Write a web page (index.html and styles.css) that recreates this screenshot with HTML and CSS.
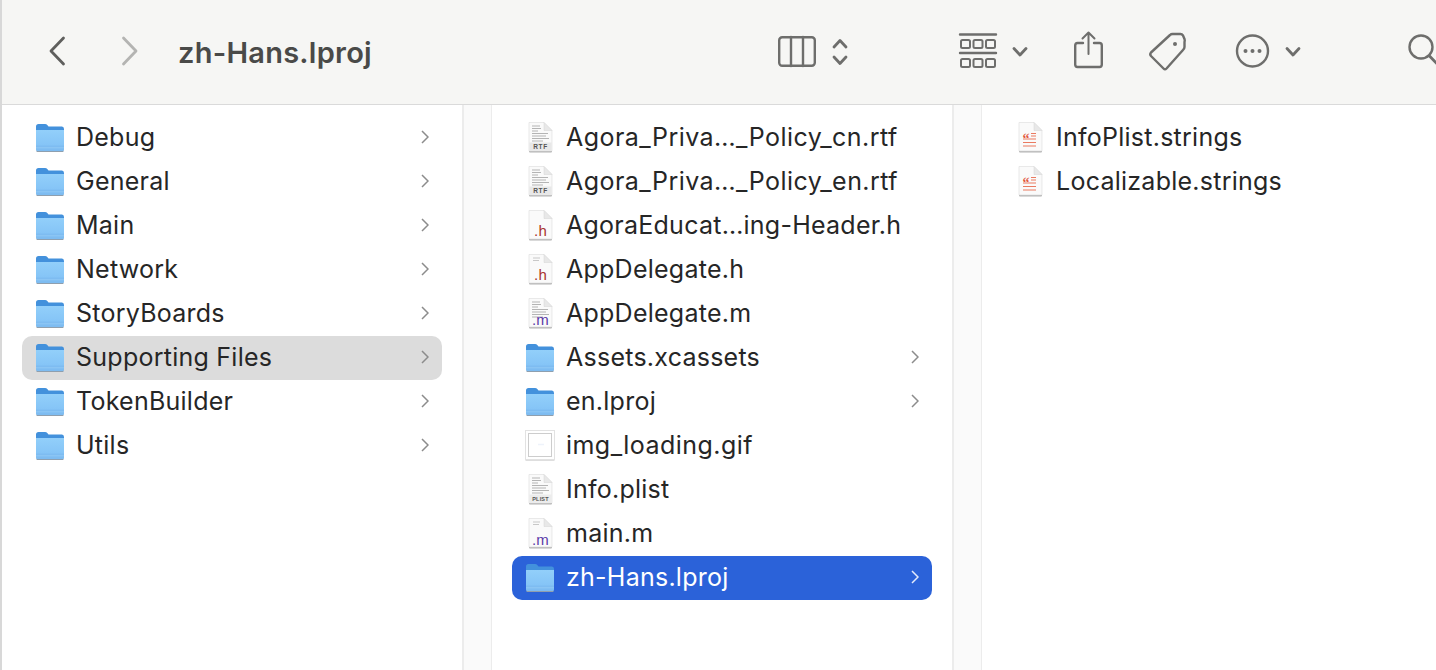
FILE: index.html
```html
<!DOCTYPE html>
<html>
<head>
    <meta charset="utf-8">
    <title>zh-Hans.lproj</title>
    <link rel="stylesheet" href="styles.css">
</head>
<body>

<svg class="defs" xmlns="http://www.w3.org/2000/svg">
    <defs>
        <linearGradient id="folderFront" x1="0" y1="0" x2="0" y2="1">
            <stop offset="0" stop-color="#92cffa"/>
            <stop offset="1" stop-color="#80c0f5"/>
        </linearGradient>
        <symbol id="folder" viewBox="0 0 32 32">
            <path d="M1.500 28.500H28.500V30.500Q28.500 31 27.500 31H2.500Q1.500 31 1.500 30.500Z" fill="#8f9fae"/>
            <path d="M1 5.500Q1 3 3.500 3H10Q11.500 3 12.500 4.200L13.500 5.500H27Q29 5.500 29 8V12H1Z" fill="#4391dc"/>
            <path d="M1 9H29V28Q29 30 27 30H3Q1 30 1 28Z" fill="url(#folderFront)"/>
            <path d="M1 24.500H29V28Q29 30 27 30H3Q1 30 1 28Z" fill="#7ebcf1"/>
            <path d="M1 26.800H29" stroke="#9bd0f8" stroke-width=".7"/>
        </symbol>
        <symbol id="page" viewBox="0 0 32 32">
            <path d="M4 3H19L27 11V30.500Q27 31.500 26 31.500H5Q4 31.500 4 30.500Z" fill="#b4b4b4"/>
            <path d="M4 1.500H19L27 9.500V29.500Q27 30 26.500 30H4.500Q4 30 4 29.500Z" fill="#fafafa" stroke="#dcdcdc" stroke-width=".6"/>
            <path d="M19 1.500V9.500H27Z" fill="#e8e8e8" stroke="#d4d4d4" stroke-width=".5"/>
        </symbol>
        <symbol id="lines" viewBox="0 0 32 32">
            <path d="M7 5H15M7 7.500H16M7 10H13M7 12.500H23M7 15H21M7 17.500H24M7 20H18" stroke="#b4b4b4" stroke-width="1.100"/>
        </symbol>
    </defs>
</svg>

<div class="window">

    <header class="toolbar">
        <svg class="tool nav-back" width="16" height="40" viewBox="0 32 16 40"><path d="M14.500 38L2 51L14.500 64" class="line dark"/></svg>
        <svg class="tool nav-forward" width="16" height="40" viewBox="0 32 16 40"><path d="M1.500 38L14 51L1.500 64" class="line faint"/></svg>
        <div class="title">zh-Hans.lproj</div>

        <svg class="tool" width="38" height="40" viewBox="0 32 38 40">
            <rect x="1.200" y="37.200" width="35.600" height="28.600" rx="3" class="line thin"/>
            <path d="M13 37V66M25 37V66" class="line thin"/>
        </svg>
        <svg class="tool gap-s" width="16" height="40" viewBox="0 32 16 40"><path d="M2 47L8 40.500L14 47M2 57L8 63.500L14 57" class="line"/></svg>

        <svg class="tool gap-view" width="36" height="40" viewBox="0 32 36 40">
            <path d="M0 34.500H36M0 53H36" class="line thin"/>
            <g class="line slim">
                <rect x="1" y="40" width="9" height="8" rx="1.500"/>
                <rect x="13.500" y="40" width="9" height="8" rx="1.500"/>
                <rect x="26" y="40" width="9" height="8" rx="1.500"/>
                <rect x="1" y="59" width="9" height="8" rx="1.500"/>
                <rect x="13.500" y="59" width="9" height="8" rx="1.500"/>
                <rect x="26" y="59" width="9" height="8" rx="1.500"/>
            </g>
        </svg>
        <svg class="tool gap-s" width="16" height="40" viewBox="0 32 16 40"><path d="M2 48.500L8 55L14 48.500" class="line"/></svg>

        <svg class="tool gap-m" width="29" height="40" viewBox="0 32 29 40">
            <path d="M9 43H3.500Q1.200 43 1.200 45.500V64.500Q1.200 67 3.500 67H25.500Q27.800 67 27.800 64.500V45.500Q27.800 43 25.500 43H20" class="line thin"/>
            <path d="M14.500 54V32.500M8.500 38.500L14.500 32.500L20.500 38.500" class="line slim"/>
        </svg>
        <svg class="tool gap-m" width="37" height="40" viewBox="0 32 37 40">
            <path d="M2 52.500L21 35Q22 34 23.500 34H31.500Q33 34 34 35.500L35.500 39Q36 40.500 35.500 42V47Q35.500 48.500 34 50L17.500 68.500Q16 70 14.500 68.500L2 56Q0.500 54 2 52.500Z" class="line thin"/>
            <circle cx="26" cy="44" r="2" class="dot"/>
        </svg>
        <svg class="tool gap-l" width="33" height="40" viewBox="0 32 33 40">
            <circle cx="16.500" cy="51" r="15.500" class="line thin"/>
            <circle cx="9.500" cy="51" r="2" class="dot"/>
            <circle cx="16.500" cy="51" r="2" class="dot"/>
            <circle cx="23.500" cy="51" r="2" class="dot"/>
        </svg>
        <svg class="tool gap-s" width="16" height="40" viewBox="0 32 16 40"><path d="M2 48.500L8 55L14 48.500" class="line"/></svg>

        <svg class="tool gap-search" width="40" height="40" viewBox="0 32 40 40">
            <circle cx="13" cy="47" r="11.500" class="line thin"/>
            <path d="M21.500 56L34 69" class="line"/>
        </svg>
    </header>

    <main class="browser">

        <section class="column">
            <div class="row"><svg class="icon"><use href="#folder"/></svg><span class="name">Debug</span><svg class="chev" viewBox="0 0 8 14"><path d="M1 1L7 7L1 13"/></svg></div>
            <div class="row"><svg class="icon"><use href="#folder"/></svg><span class="name">General</span><svg class="chev" viewBox="0 0 8 14"><path d="M1 1L7 7L1 13"/></svg></div>
            <div class="row"><svg class="icon"><use href="#folder"/></svg><span class="name">Main</span><svg class="chev" viewBox="0 0 8 14"><path d="M1 1L7 7L1 13"/></svg></div>
            <div class="row"><svg class="icon"><use href="#folder"/></svg><span class="name">Network</span><svg class="chev" viewBox="0 0 8 14"><path d="M1 1L7 7L1 13"/></svg></div>
            <div class="row"><svg class="icon"><use href="#folder"/></svg><span class="name">StoryBoards</span><svg class="chev" viewBox="0 0 8 14"><path d="M1 1L7 7L1 13"/></svg></div>
            <div class="row parent"><svg class="icon"><use href="#folder"/></svg><span class="name">Supporting Files</span><svg class="chev" viewBox="0 0 8 14"><path d="M1 1L7 7L1 13"/></svg></div>
            <div class="row"><svg class="icon"><use href="#folder"/></svg><span class="name">TokenBuilder</span><svg class="chev" viewBox="0 0 8 14"><path d="M1 1L7 7L1 13"/></svg></div>
            <div class="row"><svg class="icon"><use href="#folder"/></svg><span class="name">Utils</span><svg class="chev" viewBox="0 0 8 14"><path d="M1 1L7 7L1 13"/></svg></div>
        </section>
        <div class="gutter"></div>

        <section class="column">
            <div class="row"><svg class="icon" viewBox="0 0 32 32"><use href="#page" width="32" height="32"/><use href="#lines" width="32" height="32"/><rect x="4.300" y="21.500" width="22.400" height="8.300" fill="#e8e8e8"/><text x="15.500" y="28" class="tag">RTF</text></svg><span class="name wide">Agora_Priva…_Policy_cn.rtf</span></div>
            <div class="row"><svg class="icon" viewBox="0 0 32 32"><use href="#page" width="32" height="32"/><use href="#lines" width="32" height="32"/><rect x="4.300" y="21.500" width="22.400" height="8.300" fill="#e8e8e8"/><text x="15.500" y="28" class="tag">RTF</text></svg><span class="name wide">Agora_Priva…_Policy_en.rtf</span></div>
            <div class="row"><svg class="icon" viewBox="0 0 32 32"><use href="#page" width="32" height="32"/><text x="15.500" y="27" class="ext red">.h</text></svg><span class="name">AgoraEducat…ing-Header.h</span></div>
            <div class="row"><svg class="icon" viewBox="0 0 32 32"><use href="#page" width="32" height="32"/><path d="M8 5H15M8 7.500H14" class="rule"/><text x="15.500" y="27" class="ext red">.h</text></svg><span class="name">AppDelegate.h</span></div>
            <div class="row"><svg class="icon" viewBox="0 0 32 32"><use href="#page" width="32" height="32"/><use href="#lines" width="32" height="32"/><text x="15.500" y="27.500" class="ext purple">.m</text></svg><span class="name">AppDelegate.m</span></div>
            <div class="row"><svg class="icon"><use href="#folder"/></svg><span class="name">Assets.xcassets</span><svg class="chev" viewBox="0 0 8 14"><path d="M1 1L7 7L1 13"/></svg></div>
            <div class="row"><svg class="icon"><use href="#folder"/></svg><span class="name">en.lproj</span><svg class="chev" viewBox="0 0 8 14"><path d="M1 1L7 7L1 13"/></svg></div>
            <div class="row"><svg class="icon" viewBox="0 0 32 32"><rect x="0.500" y="2.500" width="29" height="29" fill="#bdbdbd"/><rect x="0.500" y="1.500" width="29" height="29" fill="#fff" stroke="#e2e2e2"/><rect x="3.500" y="4.500" width="23" height="23" fill="#fff" stroke="#cdcdcd"/><path d="M13 15.500H19" stroke="#eef3fb" stroke-width="1.500"/></svg><span class="name wide">img_loading.gif</span></div>
            <div class="row"><svg class="icon" viewBox="0 0 32 32"><use href="#page" width="32" height="32"/><use href="#lines" width="32" height="32"/><rect x="4.300" y="21.500" width="22.400" height="8.300" fill="#ececec"/><text x="15.500" y="28" class="tag small">PLIST</text></svg><span class="name">Info.plist</span></div>
            <div class="row"><svg class="icon" viewBox="0 0 32 32"><use href="#page" width="32" height="32"/><path d="M8 5H15M8 7.500H14" class="rule"/><text x="15.500" y="27.500" class="ext purple">.m</text></svg><span class="name">main.m</span></div>
            <div class="row selected"><svg class="icon"><use href="#folder"/></svg><span class="name">zh-Hans.lproj</span><svg class="chev" viewBox="0 0 8 14"><path d="M1 1L7 7L1 13"/></svg></div>
        </section>
        <div class="gutter"></div>

        <section class="column last">
            <div class="row"><svg class="icon" viewBox="0 0 32 32"><use href="#page" width="32" height="32"/><text x="7.500" y="22" class="quote">“</text><path d="M16 12.500H21M16 15H21M8 18H21M8 21.500H21M8 25H21" class="strings"/></svg><span class="name">InfoPlist.strings</span></div>
            <div class="row"><svg class="icon" viewBox="0 0 32 32"><use href="#page" width="32" height="32"/><text x="7.500" y="22" class="quote">“</text><path d="M16 12.500H21M16 15H21M8 18H21M8 21.500H21M8 25H21" class="strings"/></svg><span class="name">Localizable.strings</span></div>
        </section>

    </main>
</div>

</body>
</html>
```

FILE: styles.css
```css
html, body {
    margin: 0;
    height: 100%;
    overflow: hidden;
    background: #fff;
}

.defs {
    display: block;
    width: 0;
    height: 0;
}

.window {
    display: flex;
    flex-direction: column;
    height: 670px;
    border-left: 2px solid #d8d8d8;
    font-family: Inter, "Liberation Sans", sans-serif;
}

/* toolbar */

.toolbar {
    display: flex;
    align-items: center;
    flex: none;
    height: 104px;
    padding-left: 47px;
    background: #f6f6f4;
    border-bottom: 1px solid #dadada;
    overflow: hidden;
}

.tool {
    flex: none;
    overflow: visible;
}

.nav-forward { margin-left: 57px; }

.title {
    flex: none;
    width: 600px;
    margin-left: 40px;
    font-size: 29px;
    font-weight: 600;
    letter-spacing: 0.25px;
    color: #4a4a48;
}

.gap-s { margin-left: 16px; }
.gap-m { margin-left: 46px; }
.gap-l { margin-left: 50px; }
.gap-view { margin-left: 112px; }
.gap-search { margin-left: 107px; }

.line {
    fill: none;
    stroke: #6e6e6c;
    stroke-width: 2.800;
    stroke-linecap: round;
    stroke-linejoin: round;
}

.line.dark { stroke: #5f5f5d; }
.line.faint { stroke: #b4b4b2; }
.line.thin { stroke-width: 2.400; }
.line.slim { stroke-width: 2; }

.dot { fill: #6e6e6c; }

/* columns */

.browser {
    display: flex;
    flex: 1;
    min-height: 0;
}

.column {
    flex: none;
    width: 420px;
    padding: 11px 20px 0;
}

.column.last { flex: 1; }

.gutter {
    flex: none;
    width: 27px;
    background: #fafafa;
    border-left: 2px solid #ececec;
    border-right: 1px solid #ececec;
}

.row {
    display: flex;
    align-items: center;
    box-sizing: border-box;
    height: 44px;
    padding: 0 13px 2px;
    border-radius: 10px;
    font-size: 25px;
    letter-spacing: 0.25px;
    color: #262626;
}

.row.parent { background: #dcdcdc; }

.row.selected {
    background: #2b62d9;
    color: #fff;
}

.icon {
    flex: none;
    width: 32px;
    height: 32px;
    margin-right: 9px;
}

.name { white-space: nowrap; }
.name.wide { letter-spacing: 0.45px; }

.chev {
    flex: none;
    width: 8px;
    height: 14px;
    margin-left: auto;
}

.chev path {
    fill: none;
    stroke: #8c8c8c;
    stroke-width: 1.500;
}

.selected .chev path { stroke: #e4ebfb; }

/* file icons */

.tag {
    font-family: "Liberation Sans", sans-serif;
    font-size: 6.500px;
    font-weight: 700;
    letter-spacing: 0.6px;
    fill: #555;
    text-anchor: middle;
}

.tag.small {
    font-size: 5.500px;
    letter-spacing: 0.2px;
}

.ext {
    font-family: "Liberation Sans", sans-serif;
    font-size: 15px;
    text-anchor: middle;
}

.red { fill: #a8322e; }
.purple { fill: #5a3aa8; }

.rule {
    stroke: #c8c8c8;
    stroke-width: 1;
}

.quote {
    font-family: "Liberation Serif", serif;
    font-size: 14px;
    font-weight: 700;
    fill: #e2573c;
}

.strings {
    stroke: #ea7a60;
    stroke-width: 1.100;
}
```
